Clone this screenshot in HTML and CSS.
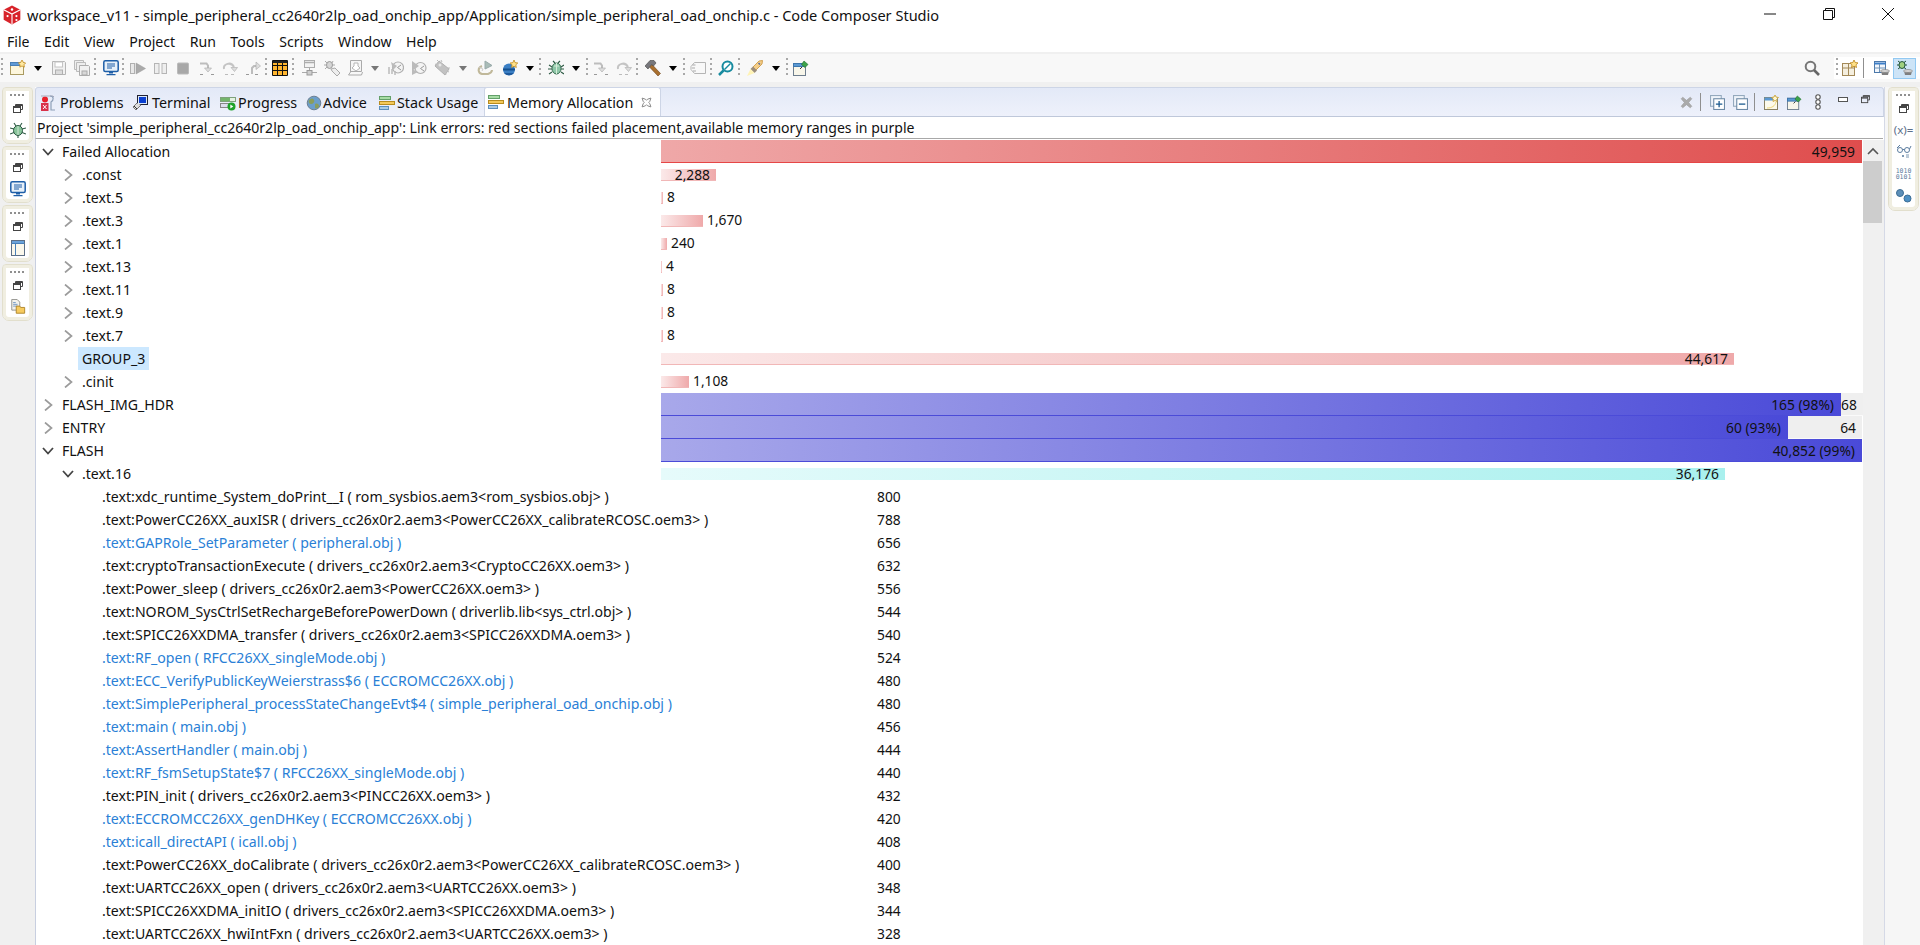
FILE: index.html
```html
<!DOCTYPE html>
<html lang="en">
<head>
<meta charset="utf-8">
<title>Code Composer Studio</title>
<link rel="stylesheet" href="styles.css">
</head>
<body>
<svg class="sprite" xmlns="http://www.w3.org/2000/svg">
<symbol id="i-new" viewBox="0 0 16 16"><rect x=".5" y="2.500" width="13" height="12" fill="#fdf6dc" stroke="#a99a60"/><rect x=".5" y="2.500" width="13" height="3" fill="#5f9ad6" stroke="#4a7fb5"/><path d="M12 0l1.200 2.300L15.600 3l-1.600 1.700.4 2.400-2.400-1.100-2.200 1.100.3-2.400L8.400 3l2.400-.7z" fill="#ffe9a0" stroke="#c08a20" stroke-width=".8"/></symbol>
<symbol id="i-save" viewBox="0 0 16 16"><path d="M1.500 1.500h12l1 1v12h-13z" fill="#f1f1f1" stroke="#b5b5b5"/><rect x="4" y="2" width="7.500" height="5" fill="#fff" stroke="#c4c4c4"/><rect x="4.500" y="10" width="7" height="4.500" fill="#dcdcdc" stroke="#b0b0b0"/></symbol>
<symbol id="i-saveall" viewBox="0 0 16 16"><path d="M.5.500h9v9h-9z" fill="#eee" stroke="#bbb"/><path d="M2.500 2.500h9v9h-9z" fill="#eee" stroke="#bbb"/><path d="M5.500 5.500h9l1 1v9h-10z" fill="#f1f1f1" stroke="#adadad"/><rect x="8" y="11" width="5" height="4" fill="#d8d8d8" stroke="#aaa"/></symbol>
<symbol id="i-mon" viewBox="0 0 16 16"><rect x=".8" y=".8" width="14.400" height="10.800" rx="1.500" fill="#e7f0f9" stroke="#1f5fa8" stroke-width="1.500"/><path d="M4 4h8M4 6h8M4 8h5" stroke="#1f5fa8"/><path d="M6 12h4v1.500H6zM3.500 14h9v1.200h-9z" fill="#1f5fa8"/></symbol>
<symbol id="i-resume" viewBox="0 0 16 16"><rect x=".5" y="3.500" width="4" height="10" fill="#e8e8e8" stroke="#b0b0b0"/><path d="M6 3l9.500 5.500L6 14z" fill="#aaa" stroke="#999" stroke-width=".5"/></symbol>
<symbol id="i-susp" viewBox="0 0 16 16"><rect x="1.500" y="3.500" width="4.500" height="10" fill="#eee" stroke="#b5b5b5"/><rect x="9" y="3.500" width="4.500" height="10" fill="#eee" stroke="#b5b5b5"/></symbol>
<symbol id="i-stop" viewBox="0 0 16 16"><rect x="1.500" y="3" width="11" height="11" rx="1" fill="#a8a8a8" stroke="#bbb"/></symbol>
<symbol id="i-into" viewBox="0 0 16 16"><path d="M1 3.500h6.500l1.500 2v3" fill="none" stroke="#bdbdbd" stroke-width="2"/><path d="M5.500 8h7l-3.500 4z" fill="#ddd" stroke="#aaa" stroke-width=".6"/><path d="M1 14.500h3M12 14.500h3" stroke="#999"/></symbol>
<symbol id="i-over" viewBox="0 0 16 16"><path d="M2 9C1 4 9 1 12 7" fill="none" stroke="#c4c4c4" stroke-width="2"/><path d="M9 7.500h6.500l-3 4z" fill="#ddd" stroke="#aaa" stroke-width=".6"/><path d="M3 14.500h3M9 14.500h3" stroke="#bbb"/></symbol>
<symbol id="i-ret" viewBox="0 0 16 16"><path d="M7 14V8l2-2h3" fill="none" stroke="#bdbdbd" stroke-width="2"/><path d="M11 2l4.500 4-4.500 3.500z" fill="#ddd" stroke="#aaa" stroke-width=".6"/><path d="M1 14.500h3M10 14.500h3" stroke="#999"/></symbol>
<symbol id="i-grid" viewBox="0 0 16 16"><rect x="1" y="1" width="14" height="14" fill="#ffb52e"/><path d="M.5.500h15v15H.5zM5.500.500v15M10.500.500v15M.5 5.500h15M.5 10.500h15" fill="none" stroke="#111"/><path d="M1 1h14v2H1z" fill="#222"/></symbol>
<symbol id="i-net" viewBox="0 0 16 16"><rect x="3.500" y=".5" width="10" height="7" fill="#f3f3f3" stroke="#adadad"/><path d="M3.500 2.500h10" stroke="#adadad" stroke-width="1.500"/><path d="M8.500 7.500v4M1 12.500h15" stroke="#aaa"/><rect x="6" y="10.500" width="5" height="4.500" fill="#cfcfcf" stroke="#999"/></symbol>
<symbol id="i-bugtag" viewBox="0 0 16 16"><ellipse cx="5.500" cy="5" rx="3" ry="3.500" fill="#d6d6d6" stroke="#999"/><path d="M1 1l2 2M9 1L8 3M0 5h2.500M8.500 5H11M1 9l2-2" stroke="#aaa"/><path d="M7 9l4-1 5 5-3 3-5-5z" fill="#eee" stroke="#aaa"/></symbol>
<symbol id="i-doc" viewBox="0 0 16 16"><path d="M3.500.5h11v11h-11z" fill="#f5f5f5" stroke="#aaa"/><path d="M7 3h4v3l2 2-4 3-4-3 2-2z" fill="#fff" stroke="#b5b5b5"/><path d="M3.500 1v11l-2 3h13l1-3" fill="none" stroke="#aaa"/></symbol>
<symbol id="i-clk1" viewBox="0 0 16 16"><circle cx="10" cy="7.500" r="5.500" fill="#f4f4f4" stroke="#b0b0b0" stroke-width="1.200"/><path d="M13 5L9.500 7.500 13 10" fill="none" stroke="#999"/><path d="M3 2l6 4-4 4z" fill="#bbb"/><path d="M1 7v7M4 9v5M7 11v4" stroke="#bbb" stroke-width="1.500"/></symbol>
<symbol id="i-clk2" viewBox="0 0 16 16"><circle cx="9.500" cy="8" r="5.500" fill="#f4f4f4" stroke="#b0b0b0" stroke-width="1.200"/><path d="M13 6L9.500 8.500 13 11" fill="none" stroke="#999"/><path d="M1 1l7 5-7 5zM1 9l6 3-6 3z" fill="#bbb"/></symbol>
<symbol id="i-chip" viewBox="0 0 16 16"><path d="M5 1l10 8-4 6L1 6z" fill="#c2c2c2" stroke="#b0b0b0"/><path d="M3 0l2 2M7 0l1 2M1 4l2 1M12 15l-1-2M15 12l-2-1M16 8l-2 0" stroke="#bbb"/><circle cx="6" cy="5" r="1.500" fill="#e8e8e8"/></symbol>
<symbol id="i-play2" viewBox="0 0 16 16"><path d="M8 1l7 4.500-7 3.500z" fill="#a9bcb7" stroke="#9aa"/><path d="M5 6C0 8 1 13 5 14h6c3-1 4-2 4-4" fill="none" stroke="#c0b89a" stroke-width="2"/><path d="M2 7l4 2-1 2" fill="none" stroke="#ccc"/></symbol>
<symbol id="i-ball" viewBox="0 0 16 16"><circle cx="7" cy="9.500" r="6" fill="#3b7fc4"/><path d="M1 9.500h12" stroke="#15508f" stroke-width="2"/><path d="M2 13h10a6 5 0 0 1-10 0z" fill="#1f5a9c"/><path d="M12 0l1 2.600 2.800.4-2 1.800.5 2.700L12 6.200 9.600 7.500l.5-2.700-2-1.800 2.800-.4z" fill="#ffe28a" stroke="#c18a1e" stroke-width=".8"/></symbol>
<symbol id="i-bug" viewBox="0 0 16 16"><ellipse cx="8.500" cy="8.500" rx="4.500" ry="5.500" fill="#8fc7a8" stroke="#34694d"/><path d="M8.500 3v11M6 6h5" stroke="#d5ecd9"/><path d="M5 1l2 2M12 1l-2 2M1 5l3 2M16 5l-3 2M0 9h4M13 9h3M1 14l3-2M16 14l-3-2" stroke="#2d5a44" stroke-width="1.100"/></symbol>
<symbol id="i-tag" viewBox="0 0 16 16"><path d="M4.500 2.500h11v11h-11L1 9.500V6.500z" fill="#f8f8f8" stroke="#b5b5b5"/><path d="M2.500 5h3M2 8h3M3 11h3" stroke="#aaa"/></symbol>
<symbol id="i-srch" viewBox="0 0 16 16"><circle cx="9.500" cy="6.500" r="5" fill="#fff" stroke="#178b9f" stroke-width="2"/><path d="M5.500 10.500L1 15" stroke="#178b9f" stroke-width="2.500"/><path d="M12.500 3.500l-6 6" stroke="#178b9f" stroke-width="1.500"/></symbol>
<symbol id="i-pen" viewBox="0 0 16 16"><path d="M6 7l6-6 3.500-.5L15 4l-6 6z" fill="#f5cf8a" stroke="#c99237" stroke-width=".8"/><path d="M3.500 9L6 6.500 10 10.500 7.500 13z" fill="#9b8d7c"/><path d="M0 16l3.500-7L7.500 13z" fill="#fff3b5"/><path d="M11.500 3l1.500 1.500" stroke="#5a6a9c" stroke-width="1.500"/></symbol>
<symbol id="i-pinwin" viewBox="0 0 16 16"><rect x=".5" y="3.500" width="12" height="12" fill="#f8f6ea" stroke="#6e7e8e"/><rect x=".5" y="3.500" width="12" height="3" fill="#5b99d3" stroke="#3d76ad"/><path d="M11 1l4 3.500-3 3-3.500-3z" fill="#3da34a" stroke="#1f6c2c" stroke-width=".6"/><path d="M9 7l-2 2" stroke="#333"/></symbol>
<symbol id="i-hammer" viewBox="0 0 16 16"><path d="M7 4.500l8.500 9-2.500 2.500L4.500 7z" fill="#a9702f" stroke="#6e431b" stroke-width=".6"/><path d="M0 6L5 .5 9 .5 11 3 8.500 6 6.500 4.500 3 9z" fill="#77777c" stroke="#444" stroke-width=".6"/></symbol>
<symbol id="i-mag" viewBox="0 0 16 16"><circle cx="6.500" cy="6.500" r="4.800" fill="none" stroke="#777" stroke-width="2"/><path d="M10 10l5 5" stroke="#666" stroke-width="2.600"/></symbol>
<symbol id="i-winstar" viewBox="0 0 16 16"><rect x=".5" y="3.500" width="12" height="12" fill="#f5efdf" stroke="#a38958"/><path d="M.5 8h12M6.500 3.500v12" stroke="#a38958"/><path d="M12 0l1.200 2.500 2.800.4-2 1.900.5 2.700-2.500-1.300-2.500 1.300.5-2.700-2-1.900 2.800-.4z" fill="#ffe28a" stroke="#b98216" stroke-width=".8"/></symbol>
<symbol id="i-persp" viewBox="0 0 16 16"><rect x=".5" y="1.500" width="11" height="11" fill="#f2f6fb" stroke="#4b78aa"/><path d="M.5 3.500h11" stroke="#3c7fc9" stroke-width="2"/><path d="M5.500 4v8M.5 8h11" stroke="#6f93b8"/><path d="M7 11h8l-1 4H8z" fill="#7f7f7f"/><ellipse cx="11" cy="11" rx="4.500" ry="1.500" fill="#d5d5d5" stroke="#777" stroke-width=".6"/></symbol>
<symbol id="i-perspbug" viewBox="0 0 16 16"><ellipse cx="5" cy="5" rx="3" ry="3.500" fill="#9fd07f" stroke="#24573c"/><path d="M1 1l2 1.500M9 1L7 2.500M0 5h2M8 5h2M1 9l2-1.500M9 9L7 7.500" stroke="#24573c"/><path d="M7 11h8l-1 4H8z" fill="#7f7f7f"/><ellipse cx="11" cy="11" rx="4.500" ry="1.500" fill="#d5d5d5" stroke="#777" stroke-width=".6"/></symbol>
<symbol id="i-problems" viewBox="0 0 16 16"><rect x="1" y="8" width="7.500" height="8" fill="#d9324a"/><path d="M3 10l3.500 4M6.500 10L3 14" stroke="#fff"/><circle cx="5" cy="4.500" r="3" fill="#e8202a"/><path d="M1 1h12l1 1" fill="none" stroke="#aab"/><path d="M10 1c4 0 4 4 1 6v8h4" fill="none" stroke="#8ea0b8" stroke-width="1.200"/></symbol>
<symbol id="i-term" viewBox="0 0 16 16"><rect x="5.500" y=".5" width="10" height="9" fill="#dbe9f8" stroke="#223"/><rect x="7" y="2" width="7" height="6" fill="#0b3fd0"/><path d="M5 8L1 12l3 3 5-5" fill="#ddd" stroke="#777"/><path d="M2 11l3 3" stroke="#333"/></symbol>
<symbol id="i-prog" viewBox="0 0 16 16"><rect x=".5" y="2.500" width="15" height="4" fill="#e4f2e2" stroke="#7fa17c"/><rect x="1" y="3" width="9" height="3" fill="#74b56c"/><rect x=".5" y="8.500" width="9" height="4" fill="#dde" stroke="#888"/><circle cx="11.500" cy="11.500" r="4" fill="#1fa32a"/><path d="M10.300 9.500v4l3-2z" fill="#fff"/></symbol>
<symbol id="i-globe" viewBox="0 0 16 16"><circle cx="8" cy="8" r="6.800" fill="#6b9ecb" stroke="#6d7f92"/><path d="M3 5c2-2 4-2 5 0s-1 4-3 4-3-2-2-4zM9 9c2-1 4 0 4 2s-3 3-4 2z" fill="#8a9d5d"/></symbol>
<symbol id="i-stack" viewBox="0 0 16 16"><rect x=".5" y="1.500" width="11" height="3" fill="#a7dca5" stroke="#63a06a"/><rect x=".5" y="6.500" width="15" height="3" fill="#f4c95a" stroke="#b88c1e"/><rect x=".5" y="11.500" width="9" height="3" fill="#a9cbe6" stroke="#5c8fbc"/></symbol>
<symbol id="i-restore" viewBox="0 0 10 10"><path d="M2.500 2.500V.5h7v5H7" fill="none" stroke="#444"/><rect x=".5" y="2.500" width="7" height="6" fill="none" stroke="#444"/><path d="M.5 3.500h7M2.500 1.500h7" stroke="#444"/></symbol>
<symbol id="i-treebug" viewBox="0 0 16 16"><ellipse cx="8" cy="8.500" rx="4.500" ry="5" fill="#88c49a" stroke="#2d5a44"/><path d="M8 4v9" stroke="#cfe6d4"/><path d="M4 1l2 3M12 1l-2 3M0 6l4 1M16 6l-4 1M0 12l4-1.500M16 12l-4-1.500M8 13v3" stroke="#2d5a44" stroke-width="1.100"/></symbol>
<symbol id="i-outline" viewBox="0 0 14 16"><rect x=".5" y=".5" width="13" height="15" fill="#fbf8ec" stroke="#5d6f85"/><path d="M.5 3.500h13M4.500 3.500v12" stroke="#4980b8"/><path d="M1 1h12v2H1z" fill="#6ba3db"/></symbol>
<symbol id="i-proj" viewBox="0 0 16 18"><path d="M1 .5h6l3 3v9H1z" fill="#f3f2ec" stroke="#8b8b85"/><path d="M2.500 4h3M2.500 6h5M2.500 8h5" stroke="#6b93c2"/><path d="M6 8h4l1 1.500h4.500V16H6z" fill="#f7cb5e" stroke="#ac8124"/></symbol>
<symbol id="i-xx" viewBox="0 0 14 14"><path d="M2 3.500L3.500 2 7 5l3.500-3L12 3.500 9 7l3 3.500-1.500 1.500L7 9l-3.500 3L2 10.500 5 7z" fill="#aaa" stroke="#999" stroke-width=".5"/></symbol>
<symbol id="i-exp" viewBox="0 0 14 14"><rect x=".5" y=".5" width="10" height="10" fill="#eef3f9" stroke="#94a9bd"/><rect x="3.500" y="3.500" width="10" height="10" fill="#fff" stroke="#6d8aa6"/><path d="M5.500 8.500h6M8.500 5.500v6" stroke="#1b5a8f" stroke-width="1.200"/></symbol>
<symbol id="i-col" viewBox="0 0 14 14"><rect x=".5" y=".5" width="10" height="10" fill="#eef3f9" stroke="#94a9bd"/><rect x="3.500" y="3.500" width="10" height="10" fill="#fff" stroke="#6d8aa6"/><path d="M5.500 8.500h6" stroke="#1b5a8f" stroke-width="1.200"/></symbol>
<symbol id="i-vnew" viewBox="0 0 15 15"><rect x=".5" y="2.500" width="13" height="12" fill="#fdfaea" stroke="#8a8262"/><rect x=".5" y="2.500" width="13" height="3" fill="#5a98d2"/><path d="M11 0l1 2 2.500.5-1.700 1.600.3 2.400L11 5.500 9 6.500l.3-2.400L7.500 2.500 10 2z" fill="#fff6cf" stroke="#c69c28" stroke-width=".8"/><path d="M3 13c5 0 8-2 9-6" fill="none" stroke="#f0d878"/></symbol>
<symbol id="i-chain" viewBox="0 0 6 16"><circle cx="3" cy="3" r="2.200" fill="#fff" stroke="#555" stroke-width="1.100"/><circle cx="3" cy="8" r="2.200" fill="#fff" stroke="#555" stroke-width="1.100"/><circle cx="3" cy="13" r="2.200" fill="#fff" stroke="#555" stroke-width="1.100"/></symbol>
<symbol id="i-glass" viewBox="0 0 16 14"><circle cx="4" cy="6" r="2.500" fill="none" stroke="#5c7da0"/><circle cx="11" cy="6" r="2.500" fill="none" stroke="#5c7da0"/><path d="M6.500 5.500h2M1 4l3-3M13.500 5L15 2" stroke="#5c7da0"/><path d="M6 11l2 2M8 11l-2 2M10 11h3M10 13h3" stroke="#5c7da0" stroke-width=".8"/></symbol>
<symbol id="i-balls" viewBox="0 0 16 14"><circle cx="4" cy="4" r="3.500" fill="#5d8fb8" stroke="#3c6d95"/><circle cx="11.500" cy="9.500" r="3.500" fill="#4d90c4" stroke="#3c6d95"/></symbol>
<symbol id="t-open" viewBox="0 0 12 12"><path d="M3 .5L9.500 6 3 11.500" fill="none" stroke="#9b9b9b" stroke-width="1.700"/></symbol>
<symbol id="t-down" viewBox="0 0 12 12"><path d="M1 3l5 5.500L11 3" fill="none" stroke="#444" stroke-width="1.800"/></symbol>
</svg>

<header class="titlebar">
  <svg class="applogo" viewBox="0 0 18 18"><path d="M9 .5l7.500 3.800v8.900L9 17.500l-7.500-4.300V4.300z" fill="#d8232a"/><path d="M1.500 4.300L9 8.200l7.500-3.900M9 8.200v9" fill="none" stroke="#fff" stroke-width="1"/><circle cx="9" cy="4" r="1.100" fill="#fff"/><circle cx="5" cy="10" r="1" fill="#fff"/><circle cx="13" cy="10" r="1" fill="#fff"/><circle cx="13" cy="13.500" r="1" fill="#fff"/></svg>
  <span class="wintitle">workspace_v11 - simple_peripheral_cc2640r2lp_oad_onchip_app/Application/simple_peripheral_oad_onchip.c - Code Composer Studio</span>
  <div class="winctl">
    <svg class="wc" viewBox="0 0 12 12"><path d="M0 6h12" stroke="#111"/></svg>
    <svg class="wc" viewBox="0 0 12 12"><path d="M.5 2.500h9v9h-9zM2.500 2.500v-2h9v9h-2" fill="none" stroke="#111"/></svg>
    <svg class="wc" viewBox="0 0 12 12"><path d="M0 0l12 12M12 0L0 12" stroke="#111"/></svg>
  </div>
</header>

<nav class="menubar"><span>File</span><span>Edit</span><span>View</span><span>Project</span><span>Run</span><span>Tools</span><span>Scripts</span><span>Window</span><span>Help</span></nav>

<div class="toolbar">
  <i class="sep s6"></i><b class="btn"><svg><use href="#i-new"/></svg></b><i class="arrow"></i>
  <b class="btn"><svg><use href="#i-save"/></svg></b><b class="btn"><svg><use href="#i-saveall"/></svg></b>
  <i class="sep s6"></i><b class="btn narrow"><svg><use href="#i-mon"/></svg></b>
  <i class="sep s5"></i><b class="btn"><svg><use href="#i-resume"/></svg></b><b class="btn"><svg><use href="#i-susp"/></svg></b><b class="btn"><svg><use href="#i-stop"/></svg></b><b class="btn"><svg><use href="#i-into"/></svg></b><b class="btn"><svg><use href="#i-over"/></svg></b><b class="btn"><svg><use href="#i-ret"/></svg></b>
  <i class="sep s4"></i><b class="btn"><svg><use href="#i-grid"/></svg></b>
  <i class="sep s6"></i><b class="btn"><svg><use href="#i-net"/></svg></b><b class="btn"><svg><use href="#i-bugtag"/></svg></b><b class="btn"><svg><use href="#i-doc"/></svg></b><i class="arrow dim"></i>
  <b class="btn"><svg><use href="#i-clk1"/></svg></b><b class="btn"><svg><use href="#i-clk2"/></svg></b><b class="btn"><svg><use href="#i-chip"/></svg></b><i class="arrow dim a20"></i>
  <b class="btn"><svg><use href="#i-play2"/></svg></b><b class="btn shift"><svg><use href="#i-ball"/></svg></b><i class="arrow a17"></i>
  <i class="sep s6"></i><b class="btn"><svg><use href="#i-bug"/></svg></b><i class="arrow"></i>
  <i class="sep s4"></i><b class="btn"><svg><use href="#i-into"/></svg></b><b class="btn"><svg><use href="#i-over"/></svg></b>
  <i class="sep s6"></i><b class="btn"><svg><use href="#i-hammer"/></svg></b><i class="arrow"></i>
  <i class="sep s4"></i><b class="btn"><svg><use href="#i-tag"/></svg></b>
  <i class="sep s5"></i><b class="btn"><svg><use href="#i-srch"/></svg></b>
  <i class="sep s6"></i><b class="btn"><svg><use href="#i-pen"/></svg></b><i class="arrow a19"></i>
  <i class="sep s4"></i><b class="btn"><svg><use href="#i-pinwin"/></svg></b>
  <div class="tb-right">
    <svg class="ico-mag"><use href="#i-mag"/></svg>
    <div class="persp">
      <i class="sep s7"></i><svg class="pico"><use href="#i-winstar"/></svg><span class="vbar"></span>
      <svg class="pico"><use href="#i-persp"/></svg><span class="pactive"><svg class="pico"><use href="#i-perspbug"/></svg></span>
    </div>
  </div>
</div>

<main class="workspace">
  <aside class="trim-left">
    <div class="trim"><span class="grip"></span><svg class="rs"><use href="#i-restore"/></svg><svg class="ti"><use href="#i-treebug"/></svg></div>
    <div class="trim"><span class="grip"></span><svg class="rs"><use href="#i-restore"/></svg><svg class="ti"><use href="#i-mon"/></svg></div>
    <div class="trim"><span class="grip"></span><svg class="rs"><use href="#i-restore"/></svg><svg class="ti"><use href="#i-outline"/></svg></div>
    <div class="trim"><span class="grip"></span><svg class="rs"><use href="#i-restore"/></svg><svg class="ti"><use href="#i-proj"/></svg></div>
  </aside>

  <section class="panel">
    <div class="tabbar">
      <div class="tab t1"><svg class="tabico"><use href="#i-problems"/></svg>Problems</div>
      <div class="tab t2"><svg class="tabico"><use href="#i-term"/></svg>Terminal</div>
      <div class="tab t3"><svg class="tabico"><use href="#i-prog"/></svg>Progress</div>
      <div class="tab t4"><svg class="tabico"><use href="#i-globe"/></svg>Advice</div>
      <div class="tab t5"><svg class="tabico"><use href="#i-stack"/></svg>Stack Usage</div>
      <div class="tab active"><svg class="tabico"><use href="#i-stack"/></svg>Memory Allocation<svg class="tabx" viewBox="0 0 10 10"><path d="M1 1l3 1 1 1 1-1 3-1-1 3-1 1 1 1 1 3-3-1-1-1-1 1-3 1 1-3 1-1-1-1z" fill="#fff" stroke="#888" stroke-width=".9"/></svg></div>
      <div class="viewbar">
        <svg class="vi"><use href="#i-xx"/></svg><span class="vbar"></span>
        <svg class="vi"><use href="#i-exp"/></svg><svg class="vi"><use href="#i-col"/></svg><span class="vbar"></span>
        <svg class="vi"><use href="#i-vnew"/></svg><svg class="vi"><use href="#i-pinwin"/></svg>
        <svg class="vchain"><use href="#i-chain"/></svg>
        <span class="vmin"></span><svg class="vrs"><use href="#i-restore"/></svg>
      </div>
    </div>
    <div class="infoline">Project 'simple_peripheral_cc2640r2lp_oad_onchip_app': Link errors: red sections failed placement,available memory ranges in purple</div>
    <div class="content">
      <div class="tree">
        <div class="row"><div class="name l1"><svg class="tw"><use href="#t-down"/></svg>Failed Allocation</div><div class="cell"><div class="bar tall red full">49,959</div></div></div>
        <div class="row"><div class="name l2"><svg class="tw"><use href="#t-open"/></svg>.const</div><div class="cell"><div class="bar pink in" style="width:55px">2,288</div></div></div>
        <div class="row"><div class="name l2"><svg class="tw"><use href="#t-open"/></svg>.text.5</div><div class="cell"><div class="bar pink" style="width:2px"></div><span class="out">8</span></div></div>
        <div class="row"><div class="name l2"><svg class="tw"><use href="#t-open"/></svg>.text.3</div><div class="cell"><div class="bar pink" style="width:42px"></div><span class="out">1,670</span></div></div>
        <div class="row"><div class="name l2"><svg class="tw"><use href="#t-open"/></svg>.text.1</div><div class="cell"><div class="bar pink" style="width:6px"></div><span class="out">240</span></div></div>
        <div class="row"><div class="name l2"><svg class="tw"><use href="#t-open"/></svg>.text.13</div><div class="cell"><div class="bar pink" style="width:1px"></div><span class="out">4</span></div></div>
        <div class="row"><div class="name l2"><svg class="tw"><use href="#t-open"/></svg>.text.11</div><div class="cell"><div class="bar pink" style="width:2px"></div><span class="out">8</span></div></div>
        <div class="row"><div class="name l2"><svg class="tw"><use href="#t-open"/></svg>.text.9</div><div class="cell"><div class="bar pink" style="width:2px"></div><span class="out">8</span></div></div>
        <div class="row"><div class="name l2"><svg class="tw"><use href="#t-open"/></svg>.text.7</div><div class="cell"><div class="bar pink" style="width:2px"></div><span class="out">8</span></div></div>
        <div class="row"><div class="name l2 notw"><span class="sel">GROUP_3</span></div><div class="cell"><div class="bar pink in" style="width:1073px">44,617</div></div></div>
        <div class="row"><div class="name l2"><svg class="tw"><use href="#t-open"/></svg>.cinit</div><div class="cell"><div class="bar pink" style="width:28px"></div><span class="out">1,108</span></div></div>
        <div class="row"><div class="name l1"><svg class="tw"><use href="#t-open"/></svg>FLASH_IMG_HDR</div><div class="cell"><div class="bar tall purple" style="width:1180px">165 (98%)</div><div class="free">68</div></div></div>
        <div class="row"><div class="name l1"><svg class="tw"><use href="#t-open"/></svg>ENTRY</div><div class="cell"><div class="bar tall purple" style="width:1127px">60 (93%)</div><div class="free">64</div></div></div>
        <div class="row"><div class="name l1"><svg class="tw"><use href="#t-down"/></svg>FLASH</div><div class="cell"><div class="bar tall purple full">40,852 (99%)</div></div></div>
        <div class="row"><div class="name l2"><svg class="tw"><use href="#t-down"/></svg>.text.16</div><div class="cell"><div class="bar cyan in" style="width:1064px">36,176</div></div></div>
        <div class="row leaf"><div class="name l3">.text:xdc_runtime_System_doPrint__I ( rom_sysbios.aem3&lt;rom_sysbios.obj&gt; )</div><div class="cell val">800</div></div>
        <div class="row leaf"><div class="name l3">.text:PowerCC26XX_auxISR ( drivers_cc26x0r2.aem3&lt;PowerCC26XX_calibrateRCOSC.oem3&gt; )</div><div class="cell val">788</div></div>
        <div class="row leaf"><div class="name l3 blue">.text:GAPRole_SetParameter ( peripheral.obj )</div><div class="cell val">656</div></div>
        <div class="row leaf"><div class="name l3">.text:cryptoTransactionExecute ( drivers_cc26x0r2.aem3&lt;CryptoCC26XX.oem3&gt; )</div><div class="cell val">632</div></div>
        <div class="row leaf"><div class="name l3">.text:Power_sleep ( drivers_cc26x0r2.aem3&lt;PowerCC26XX.oem3&gt; )</div><div class="cell val">556</div></div>
        <div class="row leaf"><div class="name l3">.text:NOROM_SysCtrlSetRechargeBeforePowerDown ( driverlib.lib&lt;sys_ctrl.obj&gt; )</div><div class="cell val">544</div></div>
        <div class="row leaf"><div class="name l3">.text:SPICC26XXDMA_transfer ( drivers_cc26x0r2.aem3&lt;SPICC26XXDMA.oem3&gt; )</div><div class="cell val">540</div></div>
        <div class="row leaf"><div class="name l3 blue">.text:RF_open ( RFCC26XX_singleMode.obj )</div><div class="cell val">524</div></div>
        <div class="row leaf"><div class="name l3 blue">.text:ECC_VerifyPublicKeyWeierstrass$6 ( ECCROMCC26XX.obj )</div><div class="cell val">480</div></div>
        <div class="row leaf"><div class="name l3 blue">.text:SimplePeripheral_processStateChangeEvt$4 ( simple_peripheral_oad_onchip.obj )</div><div class="cell val">480</div></div>
        <div class="row leaf"><div class="name l3 blue">.text:main ( main.obj )</div><div class="cell val">456</div></div>
        <div class="row leaf"><div class="name l3 blue">.text:AssertHandler ( main.obj )</div><div class="cell val">444</div></div>
        <div class="row leaf"><div class="name l3 blue">.text:RF_fsmSetupState$7 ( RFCC26XX_singleMode.obj )</div><div class="cell val">440</div></div>
        <div class="row leaf"><div class="name l3">.text:PIN_init ( drivers_cc26x0r2.aem3&lt;PINCC26XX.oem3&gt; )</div><div class="cell val">432</div></div>
        <div class="row leaf"><div class="name l3 blue">.text:ECCROMCC26XX_genDHKey ( ECCROMCC26XX.obj )</div><div class="cell val">420</div></div>
        <div class="row leaf"><div class="name l3 blue">.text:icall_directAPI ( icall.obj )</div><div class="cell val">408</div></div>
        <div class="row leaf"><div class="name l3">.text:PowerCC26XX_doCalibrate ( drivers_cc26x0r2.aem3&lt;PowerCC26XX_calibrateRCOSC.oem3&gt; )</div><div class="cell val">400</div></div>
        <div class="row leaf"><div class="name l3">.text:UARTCC26XX_open ( drivers_cc26x0r2.aem3&lt;UARTCC26XX.oem3&gt; )</div><div class="cell val">348</div></div>
        <div class="row leaf"><div class="name l3">.text:SPICC26XXDMA_initIO ( drivers_cc26x0r2.aem3&lt;SPICC26XXDMA.oem3&gt; )</div><div class="cell val">344</div></div>
        <div class="row leaf"><div class="name l3">.text:UARTCC26XX_hwiIntFxn ( drivers_cc26x0r2.aem3&lt;UARTCC26XX.oem3&gt; )</div><div class="cell val">328</div></div>
      </div>
      <div class="scrollbar">
        <div class="sb-up"><svg viewBox="0 0 12 8"><path d="M1 7l5-5 5 5" fill="none" stroke="#555" stroke-width="1.600"/></svg></div>
        <div class="sb-thumb"></div>
      </div>
    </div>
  </section>

  <aside class="trim-right">
    <div class="trim rt">
      <span class="grip"></span>
      <svg class="rs"><use href="#i-restore"/></svg>
      <span class="rt-x">(x)=</span>
      <svg class="rt-g"><use href="#i-glass"/></svg>
      <span class="rt-bin">1010<br>0101</span>
      <svg class="rt-b"><use href="#i-balls"/></svg>
    </div>
  </aside>
</main>
</body>
</html>
```

FILE: styles.css
```css
* { box-sizing: border-box; }
html, body { margin: 0; height: 945px; overflow: hidden; }
body {
  width: 1920px;
  background: #fff;
  color: #111;
  font-family: "Noto Sans", "Open Sans", "Liberation Sans", sans-serif;
  font-size: 14px;
  display: flex;
  flex-direction: column;
}
.sprite { position: absolute; width: 0; height: 0; overflow: hidden; }

.titlebar { height: 32px; flex: none; display: flex; align-items: center; padding-left: 2px; }
.applogo { width: 20px; height: 20px; flex: none; margin-top: -3px; }
.wintitle { margin-left: 5px; font-size: 14.55px; margin-top: -3px; }
.winctl { margin-left: auto; display: flex; gap: 47px; padding-right: 26px; margin-top: -4px; }
.wc { width: 12px; height: 12px; display: block; }

.menubar { height: 20px; flex: none; display: flex; padding-left: 7px; gap: 14.5px; line-height: 19px; font-size: 14.1px; }

.toolbar { height: 30px; flex: none; display: flex; align-items: center; background: #f8f8f8; border-top: 2px solid #f0f0f0; }
.btn { width: 23px; height: 16px; padding-left: 4px; flex: none; display: block; }
.btn svg { display: block; width: 16px; height: 16px; }
.btn.narrow { width: 22px; }
.btn.shift { margin-left: 2px; }
.sep { flex: none; height: 20px; display: block; padding-left: 1px; }
.sep::before { content: ""; display: block; width: 2px; height: 20px; background: repeating-linear-gradient(#a8a8a8 0 2px, transparent 2px 5px); }
.s4 { width: 4px; } .s5 { width: 5px; } .s6 { width: 6px; } .s7 { width: 7px; }
.arrow { flex: none; width: 18px; display: flex; justify-content: center; }
.arrow::before { content: ""; border-left: 4.500px solid transparent; border-right: 4.500px solid transparent; border-top: 5px solid #000; }
.arrow.dim::before { border-top-color: #777; }
.a17 { width: 17px; } .a19 { width: 19px; } .a20 { width: 20px; }
.tb-right { margin-left: auto; display: flex; align-items: center; }
.ico-mag { width: 16px; height: 16px; margin-right: 14px; }
.persp { width: 86px; height: 22px; background: #fff; display: flex; align-items: center; padding-left: 1px; }
.pico { width: 16px; height: 16px; flex: none; }
.vbar { width: 1px; height: 20px; background: #8f8f8f; flex: none; }
.persp .vbar { margin: 0 10px 0 5px; }
.pactive { width: 23px; height: 21px; background: #cde4f7; border: 1px solid #92c9f2; margin-left: 3px; display: flex; align-items: center; justify-content: center; }

.workspace { flex: 1; min-height: 0; display: flex; background: #f0f0f0; padding-top: 5px; }
.trim-left { width: 35px; flex: none; padding-left: 2px; display: flex; flex-direction: column; gap: 2px; }
.trim {
  width: 31px; height: 57px; flex: none;
  background: #fff; border: 1px solid #e2dfcd; border-radius: 4px 4px 7px 7px;
  box-shadow: inset 0 0 0 3px #f0eee1;
  display: flex; flex-direction: column; align-items: center;
  padding-top: 6px;
}
.grip { width: 16px; height: 2px; flex: none; background: repeating-linear-gradient(90deg, #8f8f8f 0 2px, transparent 2px 4px); }
.rs { width: 10px; height: 10px; margin-top: 8px; flex: none; }
.ti { width: 16px; height: 16px; margin-top: 8px; flex: none; }

.panel { width: 1849px; flex: none; display: flex; flex-direction: column; background: #fff; }
.tabbar {
  height: 30px; flex: none; display: flex; align-items: center;
  background: linear-gradient(#e3e9f7, #eef1fb);
  border: 1px solid #cdd5e6; border-bottom: 1px solid #bfc8da;
  border-radius: 3px 3px 0 0;
  padding: 1px 0 0 4px;
  font-size: 14.3px;
}
.tab { display: flex; align-items: center; height: 100%; white-space: nowrap; flex: none; }
.tabico { width: 16px; height: 16px; flex: none; margin-right: 4px; }
.t1 { width: 92px; } .t2 { width: 88px; } .t3 { width: 86px; } .t4 { width: 73px; } .t5 { width: 105px; }
.t3 .tabico { margin-right: 2px; }
.t4 .tabico { margin-right: 1px; }
.t5 .tabico { margin-right: 2px; }
.tab.active { background: #fff; border-radius: 3px 3px 0 0; border: 1px solid #cdd5e6; border-bottom: 0; width: 177px; padding-left: 3px; height: 29px; align-self: flex-end; }
.tab.active .tabico { margin-right: 3px; }
.tabx { width: 11px; height: 11px; margin-left: 8px; flex: none; }
.viewbar { margin-left: auto; display: flex; align-items: center; padding-right: 13px; margin-top: -1px; }
.vi { width: 15px; height: 15px; flex: none; margin: 0 8px 0 0; }
.viewbar .vbar { height: 18px; margin: 0 9px 0 -2px; }
.vchain { width: 6px; height: 16px; margin: 0 17px 0 5px; flex: none; }
.vmin { width: 10px; height: 5px; border: 1px solid #555; background: #fff; margin-top: -6px; flex: none; }
.vrs { width: 9px; height: 9px; margin: -5px 0 0 13px; flex: none; }

.infoline { height: 22px; flex: none; line-height: 21px; padding-left: 1px; border-left: 1px solid #c8cfe0; border-bottom: 1px solid #a8a8a8; white-space: nowrap; margin-right: 1px; color: #111; font-size: 14.06px; }

.content { flex: 1; min-height: 0; display: flex; overflow: hidden; padding-top: 1px; border-left: 1px solid #c8cfe0; }
.tree { width: 1827px; flex: none; }
.row { height: 23px; display: grid; grid-template-columns: 625px 1201px; align-items: center; font-size: 14.12px; }
.name { display: flex; align-items: center; height: 23px; white-space: nowrap; }
.l1 { padding-left: 6px; }
.l2 { padding-left: 26px; }
.l2.notw { padding-left: 42px; }
.l3 { padding-left: 66px; }
.blue { color: #2a7fd6; }
.tw { width: 12px; height: 12px; flex: none; margin-right: 8px; }
.sel { background: #cce8ff; height: 23px; line-height: 23px; padding: 0 4px; }
.cell { display: flex; align-items: center; height: 23px; font-size: 13.8px; }
.val { padding-left: 216px; }
.bar { height: 12px; flex: none; display: flex; align-items: center; justify-content: flex-end; white-space: nowrap; }
.bar.in { padding-right: 6px; }
.pink { background: linear-gradient(90deg, #fbe9e9, #efa9aa); border-bottom: 1px solid #f1b7b7; }
.cyan { background: linear-gradient(90deg, #e6fbfb, #a9f0ee); }
.tall { height: 23px; padding-right: 7px; }
.full { width: 100%; }
.red { background: linear-gradient(90deg, #efa8a8, #df4d4d); border-bottom: 1px solid #e64646; }
.purple { background: linear-gradient(90deg, #a8a8ea, #4a4ad8); border-bottom: 1px solid #4b4bd8; }
.free { flex: 1; height: 23px; background: #efefef; display: flex; align-items: center; justify-content: flex-end; padding-right: 6px; border-bottom: 1px solid #fafafa; }
.out { margin: -2px 0 0 4px; }
.scrollbar { flex: 1; background: #f0f0f0; }
.sb-up { height: 21px; display: flex; align-items: center; justify-content: center; padding-right: 2px; }
.sb-up svg { width: 12px; height: 8px; }
.sb-thumb { height: 62px; background: #cdcdcd; margin-right: 2px; }

.trim-right { flex: 1; padding-left: 3px; border-left: 1px solid #d5d9e6; background: #f6f6f6; }
.trim.rt { height: 124px; width: 31px; }
.rt-x { font-size: 11.5px; color: #5c6f8a; line-height: 14px; margin-top: 9px; }
.rt-g { width: 16px; height: 14px; margin-top: 7px; flex: none; }
.rt-bin { font-family: "DejaVu Sans Mono", monospace; font-size: 6.5px; line-height: 6px; color: #5c7da0; text-align: center; margin-top: 10px; }
.rt-b { width: 16px; height: 14px; margin-top: 9px; flex: none; }
```
